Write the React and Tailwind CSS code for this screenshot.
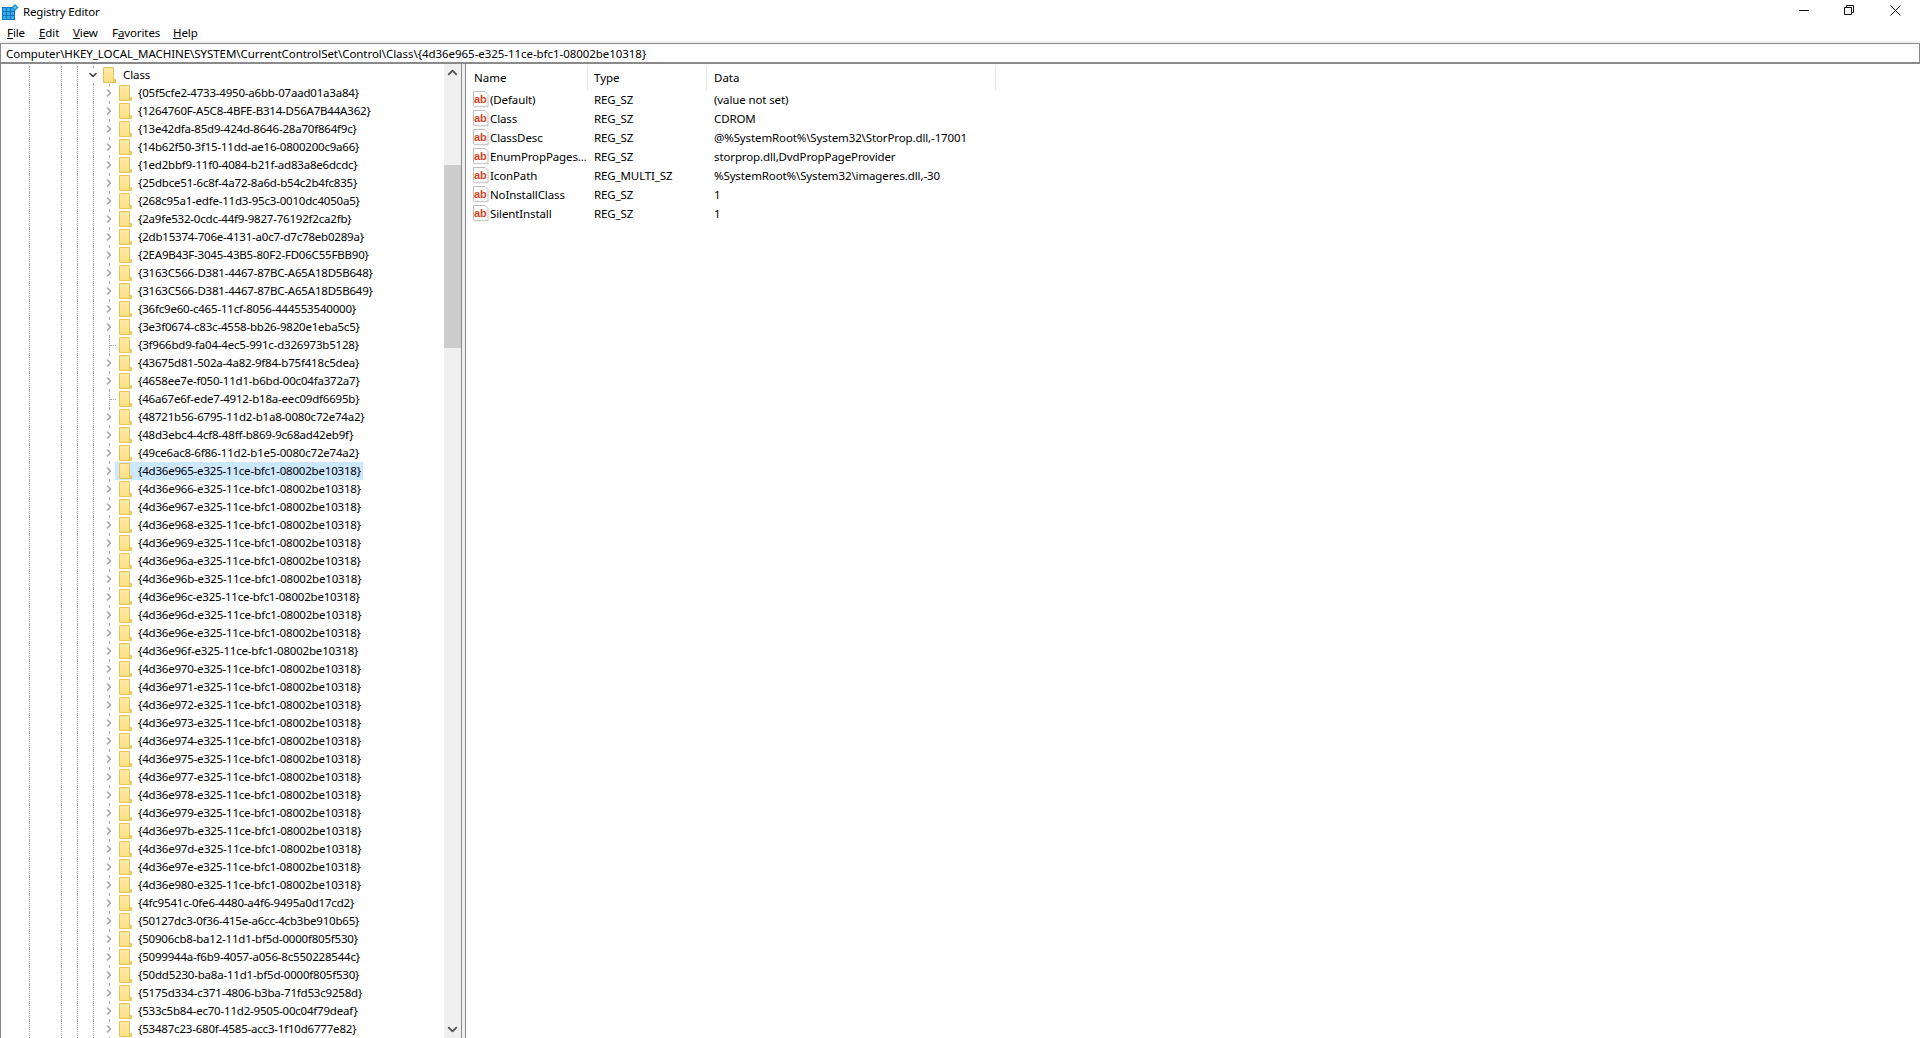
import { ChevronRight, ChevronDown, ChevronUp } from 'lucide-react';

const font = { fontFamily: '"Noto Sans", "Open Sans", sans-serif' };

const suffix = 'e325-11ce-bfc1-08002be10318';

const before = [
  '05f5cfe2-4733-4950-a6bb-07aad01a3a84',
  '1264760F-A5C8-4BFE-B314-D56A7B44A362',
  '13e42dfa-85d9-424d-8646-28a70f864f9c',
  '14b62f50-3f15-11dd-ae16-0800200c9a66',
  '1ed2bbf9-11f0-4084-b21f-ad83a8e6dcdc',
  '25dbce51-6c8f-4a72-8a6d-b54c2b4fc835',
  '268c95a1-edfe-11d3-95c3-0010dc4050a5',
  '2a9fe532-0cdc-44f9-9827-76192f2ca2fb',
  '2db15374-706e-4131-a0c7-d7c78eb0289a',
  '2EA9B43F-3045-43B5-80F2-FD06C55FBB90',
  '3163C566-D381-4467-87BC-A65A18D5B648',
  '3163C566-D381-4467-87BC-A65A18D5B649',
  '36fc9e60-c465-11cf-8056-444553540000',
  '3e3f0674-c83c-4558-bb26-9820e1eba5c5',
  '3f966bd9-fa04-4ec5-991c-d326973b5128',
  '43675d81-502a-4a82-9f84-b75f418c5dea',
  '4658ee7e-f050-11d1-b6bd-00c04fa372a7',
  '46a67e6f-ede7-4912-b18a-eec09df6695b',
  '48721b56-6795-11d2-b1a8-0080c72e74a2',
  '48d3ebc4-4cf8-48ff-b869-9c68ad42eb9f',
  '49ce6ac8-6f86-11d2-b1e5-0080c72e74a2',
];

const classIds = ['965', '966', '967', '968', '969', '96a', '96b', '96c', '96d', '96e', '96f', '970', '971', '972', '973', '974', '975', '977', '978', '979', '97b', '97d', '97e', '980']
  .map((n) => `4d36e${n}-${suffix}`);

const after = [
  '4fc9541c-0fe6-4480-a4f6-9495a0d17cd2',
  '50127dc3-0f36-415e-a6cc-4cb3be910b65',
  '50906cb8-ba12-11d1-bf5d-0000f805f530',
  '5099944a-f6b9-4057-a056-8c550228544c',
  '50dd5230-ba8a-11d1-bf5d-0000f805f530',
  '5175d334-c371-4806-b3ba-71fd53c9258d',
  '533c5b84-ec70-11d2-9505-00c04f79deaf',
  '53487c23-680f-4585-acc3-1f10d6777e82',
];

const keys = [...before, ...classIds, ...after];
const leaves = ['3f966bd9-fa04-4ec5-991c-d326973b5128', '46a67e6f-ede7-4912-b18a-eec09df6695b'];
const selected = `4d36e965-${suffix}`;

const values = [
  ['(Default)', 'REG_SZ', '(value not set)'],
  ['Class', 'REG_SZ', 'CDROM'],
  ['ClassDesc', 'REG_SZ', '@%SystemRoot%\\System32\\StorProp.dll,-17001'],
  ['EnumPropPages...', 'REG_SZ', 'storprop.dll,DvdPropPageProvider'],
  ['IconPath', 'REG_MULTI_SZ', '%SystemRoot%\\System32\\imageres.dll,-30'],
  ['NoInstallClass', 'REG_SZ', '1'],
  ['SilentInstall', 'REG_SZ', '1'],
];

function RegistryIcon() {
  return (
    <svg width="17" height="16" viewBox="0 0 17 16" className="ml-[2px] mt-[2px] shrink-0">
      <rect x="0" y="3" width="13" height="13" fill="#0b76bd" />
      <path d="M1 4h3v3H1zM5 4h3v3H5zM9 4h3v3H9zM1 8h3v3H1zM5 8h3v3H5zM9 8h3v3H9zM1 12h3v3H1zM5 12h3v3H5zM9 12h3v3H9z" fill="#35ace8" />
      <path d="M13 0l3.500 3.500L13 7 9.500 3.500z" fill="#1f8fd6" />
      <path d="M13 2l1.500 1.500L13 5l-1.500-1.500z" fill="#7cd0f5" />
    </svg>
  );
}

function FolderIcon() {
  return (
    <svg width="13" height="16" viewBox="0 0 13 16" className="shrink-0">
      <defs>
        <linearGradient id="folderFill" x1="0" y1="0" x2="0" y2="1">
          <stop offset="0" stopColor="#ffeaa8" />
          <stop offset="1" stopColor="#fde083" />
        </linearGradient>
      </defs>
      <path d="M.5.500h10v12h2v3H.5z" fill="url(#folderFill)" stroke="#e9c356" />
      <path d="M10.500 11.500v4" stroke="#e9c356" />
      <path d="M11 13h1v2h-1z" fill="#f5d266" />
    </svg>
  );
}

function StringIcon() {
  return (
    <svg width="16" height="17" viewBox="0 0 16 17" className="shrink-0">
      <path d="M.5.500h11.500l3 3v12.500l-2-1-2 1-2-1-2 1-2-1-2 1-2.500-1z" fill="#fff" stroke="#bdbdbd" />
      <text x="1" y="11.500" fontSize="11" fontWeight="700" fill="#d9441f" fontFamily="Liberation Sans, sans-serif">ab</text>
    </svg>
  );
}

function Guide({ width }) {
  return <span className={`h-full shrink-0 border-l border-dotted border-[#a8a8a8] ${width}`} />;
}

function TreeGuides() {
  return (
    <>
      <span className="h-full w-[29px] shrink-0" />
      <Guide width="w-[32px]" />
      <Guide width="w-[16px]" />
      <Guide width="w-[16px]" />
    </>
  );
}

function TreeRow({ id }) {
  const leaf = leaves.includes(id);
  const isSelected = id === selected;
  return (
    <div className="flex h-[18px] items-center">
      <TreeGuides />
      <Guide width="w-[16px]" />
      <span className="relative h-full w-[6px] shrink-0 border-l border-dotted border-[#a8a8a8]">
        {leaf ? (
          <span className="absolute left-0 top-[9px] w-[6px] border-t border-dotted border-[#a8a8a8]" />
        ) : (
          <span className="absolute -left-[7px] top-[2px] flex h-[14px] w-[12px] items-center justify-center bg-white">
            <ChevronRight size={20} strokeWidth={3.2} className="text-[#a6a6a6]" />
          </span>
        )}
      </span>
      <div className={`flex h-full w-[248px] items-center pl-[4px] ${isSelected ? 'bg-[#cce8ff]' : ''}`}>
        <FolderIcon />
        <span className="ml-[6px] whitespace-nowrap text-[11.5px] tracking-[-0.2px]">{`{${id}}`}</span>
      </div>
    </div>
  );
}

function MenuItem({ before: lead, mark, rest, className }) {
  return (
    <span className={className}>
      {lead}
      <span className="underline">{mark}</span>
      {rest}
    </span>
  );
}

export default function App() {
  return (
    <div className="flex h-[1038px] w-[1920px] flex-col overflow-hidden bg-white text-[11.5px] text-black" style={font}>
      {/* Title bar */}
      <div className="flex h-[22px] shrink-0 items-center">
        <RegistryIcon />
        <span className="ml-[4px] mt-[2px] tracking-[-0.18px]">Registry Editor</span>
        <div className="ml-auto flex items-center">
          <svg width="10" height="10" viewBox="0 0 10 10" className="mr-[35px] mb-[2px]">
            <path d="M0 5.500h10" stroke="#111" />
          </svg>
          <svg width="10" height="10" viewBox="0 0 10 10" className="mr-[36px] mb-[2px]">
            <path d="M.5 2.500h7v7h-7zM2.500 2.500v-2h7v7h-2" fill="none" stroke="#111" />
          </svg>
          <svg width="11" height="11" viewBox="0 0 11 11" className="mr-[19px] mb-[2px]">
            <path d="M.5.500l10 10M10.500.500l-10 10" stroke="#111" />
          </svg>
        </div>
      </div>

      {/* Menu bar */}
      <div className="flex h-[19px] shrink-0 items-center pl-[7px] pt-[2px] tracking-[-0.1px]">
        <MenuItem mark="F" rest="ile" className="w-[32px]" />
        <MenuItem mark="E" rest="dit" className="w-[34px]" />
        <MenuItem mark="V" rest="iew" className="w-[39px]" />
        <MenuItem before="F" mark="a" rest="vorites" className="w-[61px]" />
        <MenuItem mark="H" rest="elp" />
      </div>

      {/* Address bar */}
      <div className="h-[23px] shrink-0 border-t-2 border-t-[#f0f0f0]">
        <div className="flex h-[21px] items-center border border-b-2 border-[#8a8a8a] pl-[5px] pt-[1px] tracking-[-0.05px]">
          Computer\HKEY_LOCAL_MACHINE\SYSTEM\CurrentControlSet\Control\Class\{'{'}4d36e965-e325-11ce-bfc1-08002be10318{'}'}
        </div>
      </div>

      <div className="flex min-h-0 flex-1">
        {/* Key tree */}
        <div className="flex w-[444px] shrink-0 flex-col overflow-hidden border-l border-[#8a8a8a] pt-[2px]">
          <div className="-ml-px flex h-[18px] items-center">
            <TreeGuides />
            <span className="relative h-full w-[10px] shrink-0 border-l border-dotted border-[#a8a8a8]">
              <span className="absolute -left-[7px] top-[2px] flex h-[14px] w-[12px] items-center justify-center bg-white">
                <ChevronDown size={20} strokeWidth={3.2} className="text-[#404040]" />
              </span>
            </span>
            <FolderIcon />
            <span className="ml-[7px] tracking-[-0.1px]">Class</span>
          </div>
          <div className="-ml-px">
            {keys.map((id) => (
              <TreeRow key={id} id={id} />
            ))}
          </div>
        </div>

        {/* Tree scrollbar */}
        <div className="flex w-[17px] shrink-0 flex-col justify-between bg-[#f0f0f0]">
          <div className="flex flex-col">
            <div className="flex h-[17px] items-center justify-center bg-[#f0f0f0]">
              <ChevronUp size={15} strokeWidth={3} className="text-[#555]" />
            </div>
            <div className="mt-[84px] h-[183px] bg-[#cdcdcd]" />
          </div>
          <div className="flex h-[17px] items-center justify-center bg-[#f0f0f0]">
            <ChevronDown size={15} strokeWidth={3} className="text-[#555]" />
          </div>
        </div>

        {/* Splitter */}
        <div className="w-[5px] shrink-0 border-x border-[#8a8a8a] bg-[#f0f0f0]" />

        {/* Value list */}
        <div className="min-w-0 flex-1 pt-[2px]">
          <div className="flex h-[24px]">
            <div className="flex w-[122px] items-center border-r border-[#e5e5e5] pl-[8px]">Name</div>
            <div className="flex w-[119px] items-center border-r border-[#e5e5e5] pl-[6px]">Type</div>
            <div className="flex w-[289px] items-center border-r border-[#e5e5e5] pl-[7px]">Data</div>
          </div>
          {values.map(([name, type, data]) => (
            <div key={name} className="flex h-[19px] items-center tracking-[-0.12px]">
              <div className="flex w-[122px] items-center pl-[7px]">
                <StringIcon />
                <span className="ml-[1px] whitespace-nowrap">{name}</span>
              </div>
              <div className="w-[119px] pl-[6px]">{type}</div>
              <div className="whitespace-nowrap pl-[7px]">{data}</div>
            </div>
          ))}
        </div>
      </div>
    </div>
  );
}
